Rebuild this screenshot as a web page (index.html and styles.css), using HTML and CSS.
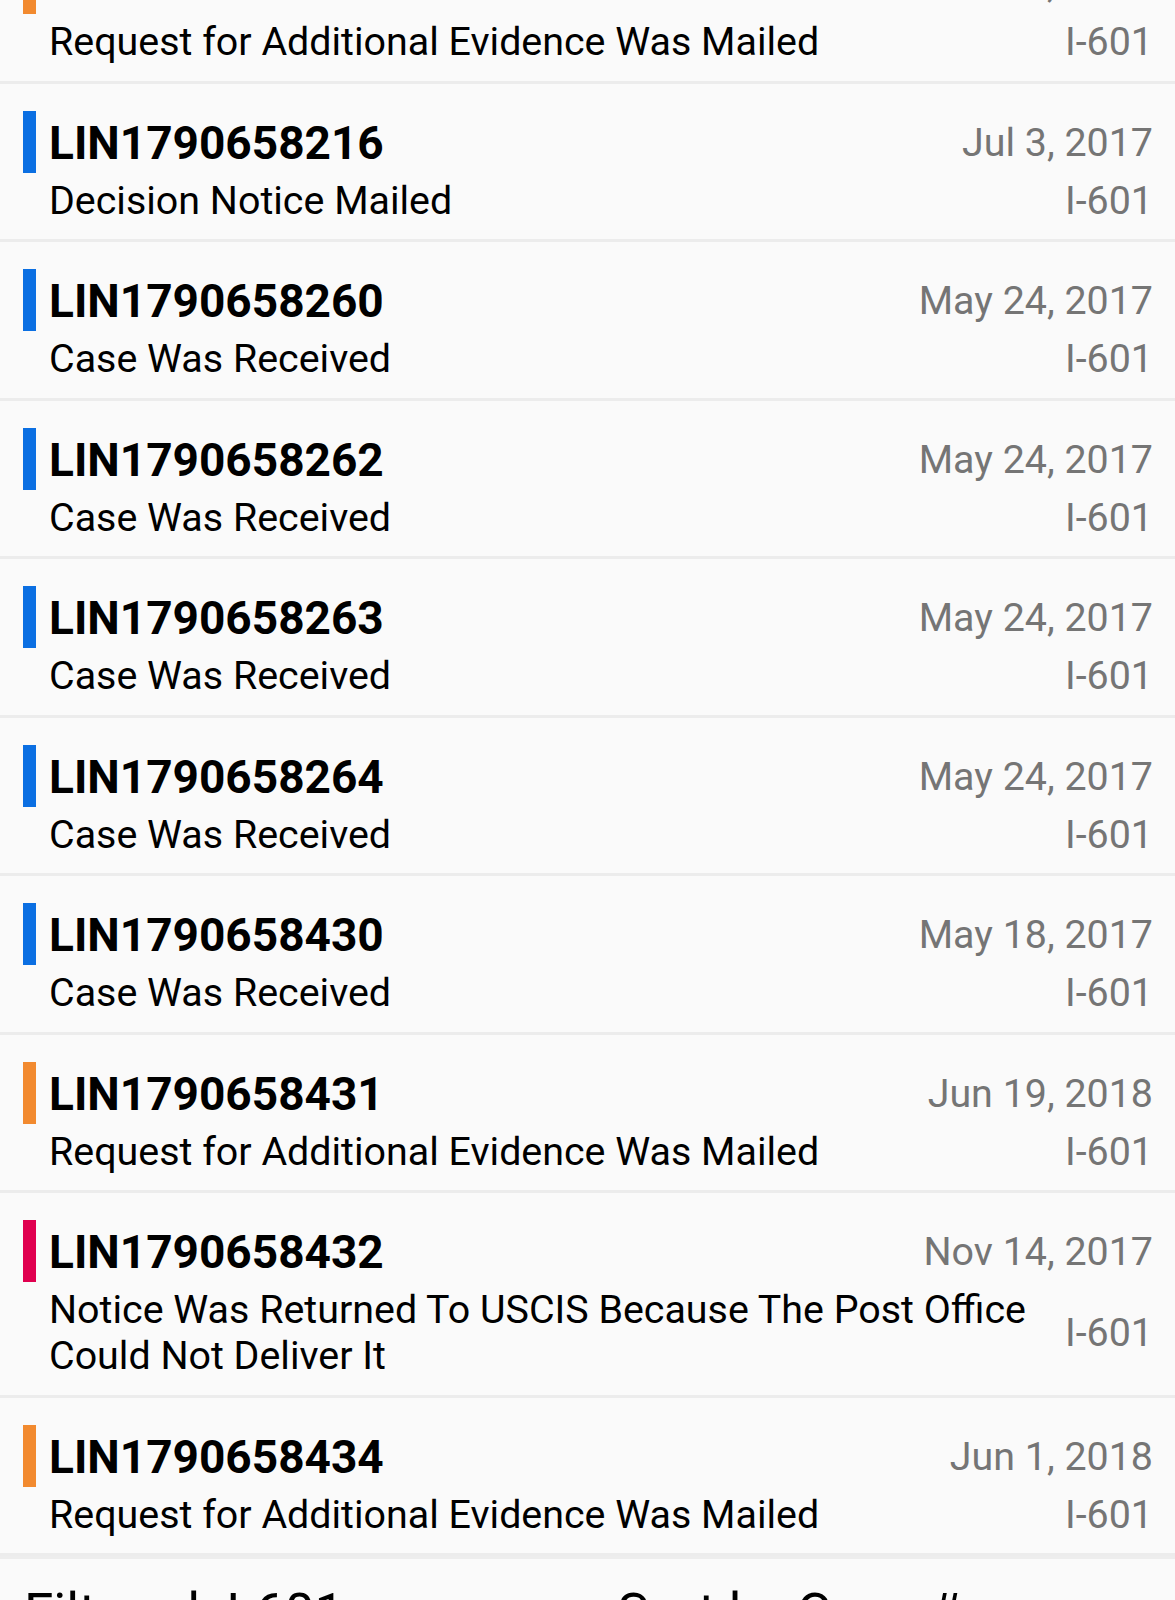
FILE: index.html
```html
<!DOCTYPE html>
<html>
<head>
  <link rel="stylesheet" href="styles.css">
</head>
<body>
  <div class="case-list">
    <div class="case">
      <span class="flag flag-orange"></span>
      <div class="case-body">
        <div class="case-top"><span class="case-num">LIN1790658210</span><span class="case-date">Jun 19, 2018</span></div>
        <div class="case-bottom"><span class="case-status">Request for Additional Evidence Was Mailed</span><span class="case-form">I-601</span></div>
      </div>
    </div>

    <div class="case">
      <span class="flag flag-blue"></span>
      <div class="case-body">
        <div class="case-top"><span class="case-num">LIN1790658216</span><span class="case-date">Jul 3, 2017</span></div>
        <div class="case-bottom"><span class="case-status">Decision Notice Mailed</span><span class="case-form">I-601</span></div>
      </div>
    </div>

    <div class="case">
      <span class="flag flag-blue"></span>
      <div class="case-body">
        <div class="case-top"><span class="case-num">LIN1790658260</span><span class="case-date">May 24, 2017</span></div>
        <div class="case-bottom"><span class="case-status">Case Was Received</span><span class="case-form">I-601</span></div>
      </div>
    </div>

    <div class="case">
      <span class="flag flag-blue"></span>
      <div class="case-body">
        <div class="case-top"><span class="case-num">LIN1790658262</span><span class="case-date">May 24, 2017</span></div>
        <div class="case-bottom"><span class="case-status">Case Was Received</span><span class="case-form">I-601</span></div>
      </div>
    </div>

    <div class="case">
      <span class="flag flag-blue"></span>
      <div class="case-body">
        <div class="case-top"><span class="case-num">LIN1790658263</span><span class="case-date">May 24, 2017</span></div>
        <div class="case-bottom"><span class="case-status">Case Was Received</span><span class="case-form">I-601</span></div>
      </div>
    </div>

    <div class="case">
      <span class="flag flag-blue"></span>
      <div class="case-body">
        <div class="case-top"><span class="case-num">LIN1790658264</span><span class="case-date">May 24, 2017</span></div>
        <div class="case-bottom"><span class="case-status">Case Was Received</span><span class="case-form">I-601</span></div>
      </div>
    </div>

    <div class="case">
      <span class="flag flag-blue"></span>
      <div class="case-body">
        <div class="case-top"><span class="case-num">LIN1790658430</span><span class="case-date">May 18, 2017</span></div>
        <div class="case-bottom"><span class="case-status">Case Was Received</span><span class="case-form">I-601</span></div>
      </div>
    </div>

    <div class="case">
      <span class="flag flag-orange"></span>
      <div class="case-body">
        <div class="case-top"><span class="case-num">LIN1790658431</span><span class="case-date">Jun 19, 2018</span></div>
        <div class="case-bottom"><span class="case-status">Request for Additional Evidence Was Mailed</span><span class="case-form">I-601</span></div>
      </div>
    </div>

    <div class="case">
      <span class="flag flag-red"></span>
      <div class="case-body">
        <div class="case-top"><span class="case-num">LIN1790658432</span><span class="case-date">Nov 14, 2017</span></div>
        <div class="case-bottom"><span class="case-status">Notice Was Returned To USCIS Because The Post Office Could Not Deliver It</span><span class="case-form">I-601</span></div>
      </div>
    </div>

    <div class="case">
      <span class="flag flag-orange"></span>
      <div class="case-body">
        <div class="case-top"><span class="case-num">LIN1790658434</span><span class="case-date">Jun 1, 2018</span></div>
        <div class="case-bottom"><span class="case-status">Request for Additional Evidence Was Mailed</span><span class="case-form">I-601</span></div>
      </div>
    </div>
  </div>

  <div class="toolbar">
    <div class="toolbar-item">Filtered: I-601</div>
    <div class="toolbar-item">Sort by Case #</div>
  </div>
</body>
</html>
```

FILE: styles.css
```css
/* Base */
body {
  margin: 0;
  height: 1600px;
  overflow: hidden;
  background: #fafafa;
  font-family: Roboto, "Noto Sans", sans-serif;
  color: #000;
}

/* List is scrolled, first row is partly off screen */
.case-list {
  margin-top: -75px;
}

.case {
  display: flex;
  align-items: flex-start;
  padding: 35px 22px 15.5px 0;
  border-bottom: 3px solid #ececec;
}

/* Status colour strip */
.flag {
  flex: none;
  width: 13px;
  height: 62px;
  margin: -8px 13px 0 23px;
}

.flag-blue {
  background: #0b6fe2;
}

.flag-orange {
  background: #f28a2f;
}

.flag-red {
  background: #e0004f;
}

.case-body {
  flex: 1;
  min-width: 0;
}

.case-top {
  display: flex;
  justify-content: space-between;
  align-items: flex-start;
  margin-bottom: 11px;
}

.case-num {
  font-size: 46px;
  font-weight: bold;
  line-height: 48px;
}

.case-date {
  font-size: 39.4px;
  line-height: 48px;
  color: #757575;
}

.case-bottom {
  display: flex;
  justify-content: space-between;
  align-items: center;
  gap: 16px;
}

.case-status {
  font-size: 39.4px;
  line-height: 46px;
}

.case-form {
  flex: none;
  font-size: 39.4px;
  line-height: 46px;
  color: #757575;
}

/* Bottom bar */
.toolbar {
  display: grid;
  grid-template-columns: 1fr 1fr;
  border-top: 3px solid #ededed;
  padding-top: 23px;
}

.toolbar-item {
  padding: 0 24px;
  font-size: 53px;
  line-height: 62px;
}

.toolbar-item + .toolbar-item {
  padding-left: 30px;
}
```
